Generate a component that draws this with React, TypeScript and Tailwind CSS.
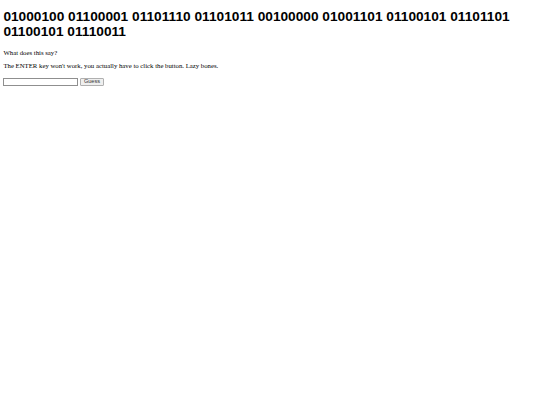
export default function App() {
  return (
    <div className="min-h-screen bg-white px-[3.4px] pt-[8.5px] text-black font-['Liberation_Serif',serif] text-[6.75px] leading-[1.15]">
      <h1 className="mb-[10.3px] font-['Liberation_Sans',Arial,sans-serif] text-[13.7px] font-bold leading-[15px]">
        01000100 01100001 01101110 01101011 00100000 01001101 01100101 01101101 01100101 01110011
      </h1>
      <p className="mb-[5.8px]">What does this say?</p>
      <p className="mb-[8.1px]">The ENTER key won't work, you actually have to click the button. Lazy bones.</p>
      <div className="flex items-center gap-[1.5px]">
        <input
          type="text"
          className="h-[7.6px] w-[75px] border border-[#8f8f8f] bg-white px-px text-[5.6px] outline-none"
        />
        <button className="h-[7.6px] rounded-[1px] border border-[#b0b0b0] bg-[#efefef] px-[3px] font-['Liberation_Sans',Arial,sans-serif] text-[5.6px] leading-none text-[#333]">
          Guess
        </button>
      </div>
    </div>
  );
}
